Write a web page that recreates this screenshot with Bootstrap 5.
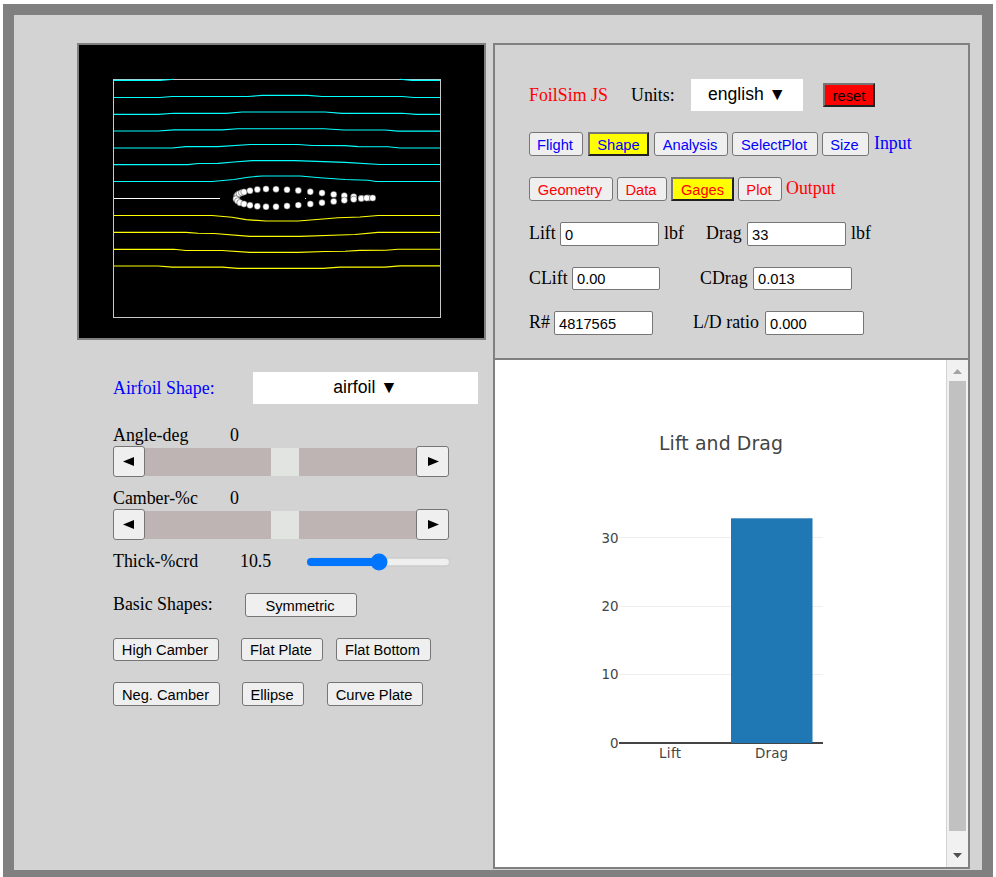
<!DOCTYPE html>
<html lang="en">
<head>
<meta charset="utf-8">
<title>FoilSim JS</title>
<link href="https://cdn.jsdelivr.net/npm/bootstrap@5.3.0/dist/css/bootstrap.min.css" rel="stylesheet">
<script src="https://cdn.jsdelivr.net/npm/bootstrap@5.3.0/dist/js/bootstrap.bundle.min.js"></script>
<style>
html{overflow:hidden}
body{font:17.85px/20px "Liberation Serif","Times New Roman",serif;color:#000;background:#fff;height:877px;overflow:hidden}
.frame{margin:4px 3px 0;width:990px;height:877px;border:11px solid gray;background:#d3d3d3;padding:28px 0 0 63px;gap:7px}
.left-col{width:409px}
.right-col{width:477px}
.tunnel{border:2px solid gray;background:#000;height:297px}
.controls{padding-left:36px}
.line{white-space:nowrap}
.line>*{flex:none}
.line>span{padding-bottom:2px}
.outputs{border:2px solid gray;height:317px;padding:34px 0 0 34px}
.chart-box{border:2px solid gray;border-top:0;height:509px;background:#fff}
.ui,.pick,.field{font-family:"Liberation Sans",Arial,sans-serif}
.ui{font-size:14.67px;line-height:20px;height:24px;padding:1px 2px 0 0;text-align:center;background:#efefef;border:1px solid #767676;border-radius:3px;color:#000}
.ui.on{background:#ff0;border:2px solid;border-color:#767676 #212121 #212121 #767676;border-radius:0;padding:1px 0 0}
.ui.alarm{background:red}
.blue,.ui.blue{color:#00f}
.red,.ui.red{color:red}
.pick{background:#fff;height:32px;line-height:30px;font-size:17.6px;border:0;padding:0 0 2px;text-align:center;color:#000}
.field{font-size:14.67px;height:24px;width:99px;border:1px solid #767676;border-radius:2px;background:#fff;padding:1px 4px 0;color:#000}
.short{height:23px}
.track{height:28px;width:271px;background:#beb4b3;padding-left:126px}
.thumb{width:28px;height:28px;background:#e2e4e1}
.ui.arrow{width:32px;height:31px;padding:0}
.ui.arrow-next{width:33px}
.arrow svg{display:block;margin:auto}
.track-row{height:31px}
.scroller{width:22px;background:#f1f1f1;border-left:1px solid #d3d3d3;padding:0 2px;height:507px}
.scroll-thumb{height:450px;width:17px;background:#c1c1c1}
svg text{font-family:"DejaVu Sans",Verdana,sans-serif;fill:#444}
.h32{height:32px}.h24{height:24px}
.g4{margin-left:4px}.g5{margin-left:5px}
#units{width:112px}#reset{width:52px;margin-left:20px}
#flight{width:54px}#shape{width:61px}#analysis{width:74px}#selectplot{width:86px}#size{width:47px}
#geometry{width:84px}#data{width:50px}#gages{width:63px}#plot{width:44px}
#foil{width:225px}
#symmetric{width:112px}#high{width:106px}#plate{width:82px;margin-left:22px}#bottom{width:95px;margin-left:13px}
#neg{width:107px}#ellipse{width:62px;margin-left:22px}#curve{width:96px;margin-left:23px}
#title{width:102px;padding:0}#unitlabel{width:60px;padding:0}
#l-lift{width:31px}#u-lift{width:42px;margin-left:5px}#l-drag{width:41px}#u-drag{margin-left:5px}
#l-clift{width:43px}#clift{width:88px}#l-cdrag{width:53px;margin-left:40px}
#l-re{width:25px}#l-ld{width:72px;margin-left:40px}
#l-foil{width:140px;padding:0}#l-angle,#l-camber{width:117px}#l-thick{width:127px}#v-thick{width:67px}#l-basic{width:132px}
#r-inputs,#r-outputs,#r-lift,#r-coef,#r-re{margin-top:21px}
#r-foil{margin-top:32px}#r-angle{margin-top:21px;height:21px}#r-camber{margin-top:11px;height:21px}#r-thick{margin-top:11px;height:21px}
#r-basic,#r-high,#r-neg{margin-top:21px}
</style>
</head>
<body>
<main class="frame d-flex align-items-start">
<section class="left-col flex-shrink-0">
<div class="tunnel">
<svg class="d-block" width="405" height="293" viewBox="79 45 405 293" fill="none" stroke-width="1">
<rect x="113.500" y="79.500" width="327" height="238" stroke="#c8c8c8"/>
<g stroke="#0ff" stroke-width="1.15">
<path d="M114 80.300H160L174 79.300M400 79.300L412 80.300H440"/>
<path d="M114 97.500H160L172 96.500H248L262 95.400H308L322 96.500H402L414 97.500H440"/>
<path d="M114 114.400H158L174 113.300H226L242 112H325L342 113.300H402L416 114.400H440"/>
<path d="M114 131H158L174 129.900H222L238 128.700H324L344 130H385L398 131.100H440"/>
<path d="M114 148H172L186 146.600H218L250 144.500H298L312 145.500 345 145.600 358 146.600 388 146.700 400 148H440"/>
<path d="M114 164.600H188L198 163.500 218 163.400 234 162 252 160.600H295L345 162.400 380 164.500H440"/>
<path d="M114 181.500H212L234 179.500 248 177.200 262 176H300L320 177.800 345 179.500 368 180.300 376 181.500H440"/>
</g>
<path stroke="#fff" d="M114 198.500H220M305 198.500h1"/>
<g stroke="#ff0" stroke-width="1.15">
<path d="M114 215.500H212L232 217.300 246 219.600 266 221H298L320 219.300 338 217.800 360 217 378 215.500H440"/>
<path d="M114 232.400H186L198 233.300 214 233.500 250 236.400H300L340 235 355 234.500 378 232.400H440"/>
<path d="M114 249.300H174L186 250.500H222L250 252.400H298L325 251.500 345 251.300 360 250.400 386 250.200 398 249.200H440"/>
<path d="M114 266H158L172 267.100H222L238 268.400H323L340 267.100H385L400 265.900H440"/>
</g>
<g id="surface" fill="#fff" stroke="#000" stroke-width=".4"></g>
</svg>
</div>
<div class="controls">
<div class="line d-flex align-items-center h32" id="r-foil"><span id="l-foil" class="blue">Airfoil Shape:</span><button class="pick" id="foil">airfoil ▼</button></div>
<div class="line d-flex" id="r-angle"><span id="l-angle">Angle-deg</span><span>0</span></div>
<div class="d-flex align-items-center track-row">
<button class="ui arrow"><svg width="12" height="11"><path d="M0 5.500L11 1V10Z"/></svg></button><div class="track"><div class="thumb"></div></div><button class="ui arrow arrow-next"><svg width="12" height="11"><path d="M12 5.500L1 1V10Z"/></svg></button></div>
<div class="line d-flex" id="r-camber"><span id="l-camber">Camber-%c</span><span>0</span></div>
<div class="d-flex align-items-center track-row">
<button class="ui arrow"><svg width="12" height="11"><path d="M0 5.500L11 1V10Z"/></svg></button><div class="track"><div class="thumb"></div></div><button class="ui arrow arrow-next"><svg width="12" height="11"><path d="M12 5.500L1 1V10Z"/></svg></button></div>
<div class="line d-flex" id="r-thick"><span id="l-thick">Thick-%crd</span><span id="v-thick">10.5</span><svg width="143" height="21"><rect y="7.200" width="142.500" height="7.600" rx="3.800" fill="#efefef" stroke="#b2b2b2" stroke-width=".5"/><path d="M4 7H72V15H4A4 4 0 0 1 4 7Z" fill="#0075ff"/><circle cx="72" cy="11" r="8.500" fill="#0075ff"/></svg></div>
<div class="line d-flex align-items-center h24" id="r-basic"><span id="l-basic">Basic Shapes:</span><button class="ui" id="symmetric">Symmetric</button></div>
<div class="line d-flex" id="r-high"><button class="ui short" id="high">High Camber</button><button class="ui short" id="plate">Flat Plate</button><button class="ui short" id="bottom">Flat Bottom</button></div>
<div class="line d-flex" id="r-neg"><button class="ui" id="neg">Neg. Camber</button><button class="ui" id="ellipse">Ellipse</button><button class="ui" id="curve">Curve Plate</button></div>
</div>
</section>
<section class="right-col flex-shrink-0">
<div class="outputs">
<div class="line d-flex align-items-center h32"><span id="title" class="red">FoilSim JS</span><span id="unitlabel">Units:</span><button class="pick" id="units">english ▼</button><button class="ui on alarm" id="reset">reset</button></div>
<div class="line d-flex align-items-center h24" id="r-inputs"><button class="ui blue" id="flight">Flight</button><button class="ui blue on g5" id="shape">Shape</button><button class="ui blue g5" id="analysis">Analysis</button><button class="ui blue g4" id="selectplot">SelectPlot</button><button class="ui blue g4" id="size">Size</button><span class="blue g5">Input</span></div>
<div class="line d-flex align-items-center h24" id="r-outputs"><button class="ui red" id="geometry">Geometry</button><button class="ui red g4" id="data">Data</button><button class="ui red on g4" id="gages">Gages</button><button class="ui red g4" id="plot">Plot</button><span class="red g4">Output</span></div>
<div class="line d-flex align-items-center h24" id="r-lift"><span id="l-lift">Lift</span><input class="field" value="0"><span id="u-lift">lbf</span><span id="l-drag">Drag</span><input class="field" value="33"><span id="u-drag">lbf</span></div>
<div class="line d-flex align-items-center short" id="r-coef"><span id="l-clift">CLift</span><input class="field short" id="clift" value="0.00"><span id="l-cdrag">CDrag</span><input class="field short" value="0.013"></div>
<div class="line d-flex align-items-center h24" id="r-re"><span id="l-re">R#</span><input class="field" value="4817565"><span id="l-ld">L/D ratio</span><input class="field" value="0.000"></div>
</div>
<div class="chart-box d-flex">
<svg class="d-block" width="451" height="507" viewBox="495 360 451 507" font-size="13.400">
<text x="659" y="450" font-size="18.900" textLength="124">Lift and Drag</text>
<path stroke="#eee" d="M619 537.500H823M619 606.500H823M619 674.500H823"/>
<path stroke="#444" stroke-width="2" d="M619 743H823"/>
<rect x="731" y="518.300" width="81.500" height="224.700" fill="#1f77b4"/>
<g text-anchor="end"><text x="618.500" y="543">30</text><text x="618.500" y="611">20</text><text x="618.500" y="679">10</text><text x="618.500" y="748">0</text></g>
<g text-anchor="middle"><text x="670" y="758" textLength="22">Lift</text><text x="771.500" y="758" textLength="33">Drag</text></g>
</svg>
<div class="scroller"><svg class="d-block" width="17" height="21"><path d="M4 14L8.500 9L13 14Z" fill="#a3a3a3"/></svg><div class="scroll-thumb"></div><svg class="d-block" width="17" height="36"><path d="M4 22L8.500 27L13 22Z" fill="#505050"/></svg></div>
</div>
</section>
</main>
<script>
const points = [[236.7,196],[237.7,194.7],[239.3,193.7],[241.7,192.7],[244,192],[250,190.7],[257.3,189.5],[266,189],[276,189.2],[287,189.7],[298.3,190.5],[310.3,191.8],[322,193],[333.7,194.4],[344.3,195.7],[353.7,196.7],[361.3,198.2],[236,199],[237.7,201],[240,202.7],[244,204],[250,205.3],[257.3,206.3],[266,206.8],[276,206.7],[287,206],[298.3,205.1],[310.3,204],[322,202.8],[333.7,201.4],[344.3,200.3],[353.7,199.3],[361.3,198.5],[368.3,198],[366.7,198],[372.7,198]];
document.getElementById('surface').innerHTML = points.map(p => `<circle cx="${p[0]}" cy="${p[1]}" r="3.2"/>`).join('');
</script>
</body>
</html>
